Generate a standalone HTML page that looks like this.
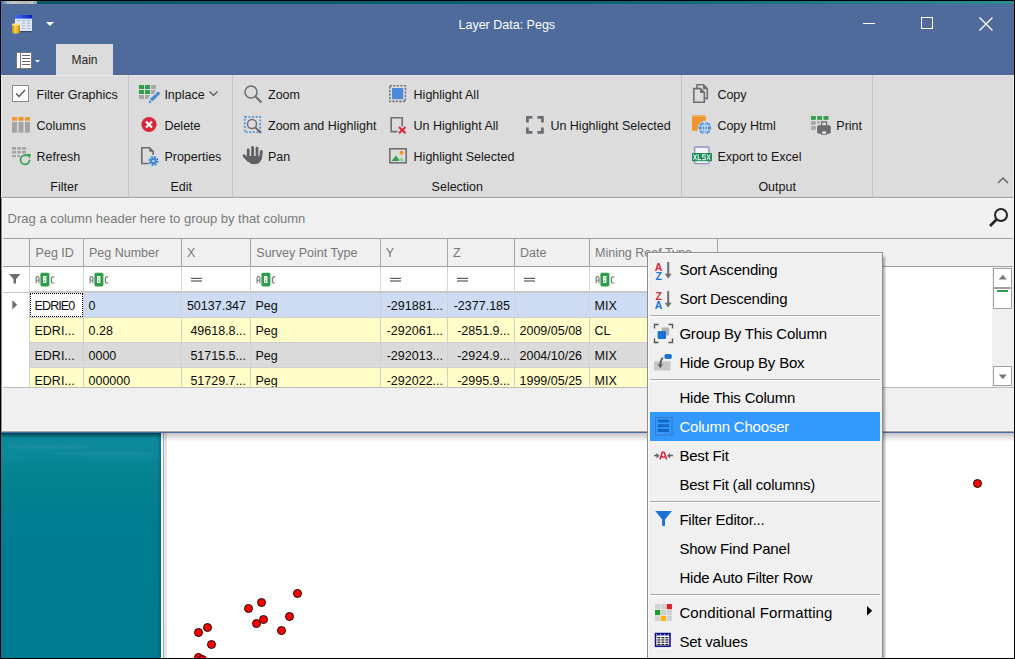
<!DOCTYPE html>
<html><head><meta charset="utf-8"><title>Layer Data: Pegs</title>
<style>
html,body{margin:0;padding:0;}
body{width:1015px;height:659px;overflow:hidden;position:relative;background:#000;font-family:"Liberation Sans", sans-serif;}
.t{position:absolute;white-space:nowrap;font-family:"Liberation Sans", sans-serif;}
svg{overflow:visible}
</style></head><body>
<div style="position:absolute;left:1px;top:1px;width:1013px;height:657px;background:#007c91"></div>
<div style="position:absolute;left:1px;top:1px;width:1013px;height:3px;background:linear-gradient(90deg,#0a5666 0%,#0c6374 60%,#2d8c93 100%)"></div>
<div style="position:absolute;left:1px;top:433px;width:160px;height:225px;background:linear-gradient(180deg,#04606e 0px,#0a7f92 2px,#0d899c 6px,#0b889b 22px,#06838f 42px,#007d91 80px,#007c91 140px,#007a8e 225px)"></div>
<div style="position:absolute;left:1px;top:1px;width:36px;height:3px;background:linear-gradient(90deg,#2f7ab4 0px,#a4b4be 6px,#c4c6c4 12px,#b2b6b4 24px,#c2c6c2 31px,#7aa2a4 36px)"></div>
<div style="position:absolute;left:1px;top:4px;width:1013px;height:71px;background:#4e6b9c"></div>
<svg style="position:absolute;left:11px;top:14px" width="24" height="21" viewBox="0 0 24 21"><defs><linearGradient id="cy" x1="0" x2="1"><stop offset="0" stop-color="#c98f0c"/><stop offset="0.45" stop-color="#f7d25a"/><stop offset="1" stop-color="#c48a08"/></linearGradient>
<linearGradient id="hd" x1="0" x2="1"><stop offset="0" stop-color="#3d6ff0"/><stop offset="1" stop-color="#0a1fc8"/></linearGradient></defs>
<rect x="4" y="1" width="17" height="16.5" fill="#dfe6f5"/>
<rect x="4" y="1" width="17" height="3.6" fill="url(#hd)"/>
<g fill="#a4b2cc"><rect x="6" y="6" width="3" height="1"/><rect x="11" y="6" width="3" height="1"/><rect x="16" y="6" width="3" height="1"/>
<rect x="11" y="8.6" width="3" height="1"/><rect x="16" y="8.6" width="3" height="1"/><rect x="11" y="11.2" width="3" height="1"/><rect x="16" y="11.2" width="3" height="1"/><rect x="11" y="13.8" width="3" height="1"/><rect x="16" y="13.8" width="3" height="1"/></g>
<rect x="4" y="17" width="17" height="1.2" fill="#34496e"/>
<path d="M1 10.5V18Q1 19.5 5 19.5Q9 19.5 9 18V10.5Z" fill="url(#cy)"/>
<ellipse cx="5" cy="10.5" rx="4" ry="1.3" fill="#fbe58a"/></svg>
<svg style="position:absolute;left:46px;top:22px" width="8" height="5" viewBox="0 0 8 5"><path d="M0 0H8L4 4Z" fill="#fff"/></svg>
<div class="t" style="left:458.5px;top:19.42px;font-size:12.5px;line-height:12.5px;color:#ffffff;">Layer Data: Pegs</div>
<div style="position:absolute;left:863px;top:23px;width:12px;height:1px;background:#fff"></div>
<div style="position:absolute;left:921px;top:17px;width:12px;height:12px;border:1px solid #fff;box-sizing:border-box"></div>
<svg style="position:absolute;left:979px;top:17px" width="14" height="14" viewBox="0 0 14 14"><path d="M0.5 0.5L13.5 13.5M13.5 0.5L0.5 13.5" stroke="#fff" stroke-width="1.3"/></svg>
<div style="position:absolute;left:1px;top:4px;width:1px;height:70px;background:#5577aa"></div>
<div style="position:absolute;left:1px;top:74px;width:1013px;height:1px;background:#48659a"></div>
<svg style="position:absolute;left:15px;top:51px" width="28" height="20" viewBox="0 0 28 20">
<rect x="1.5" y="1.5" width="15" height="16" fill="#fff" stroke="#777" stroke-width="1"/>
<rect x="5" y="2" width="1" height="15" fill="#777"/>
<g fill="#666"><rect x="7" y="4" width="8" height="1"/><rect x="7" y="7" width="8" height="1"/><rect x="7" y="10" width="8" height="1"/><rect x="7" y="13" width="8" height="1"/></g>
<path d="M20 9H25L22.5 11.5Z" fill="#fff"/>
</svg>
<div style="position:absolute;left:56px;top:44px;width:57px;height:31px;background:#dcdcdc"></div>
<div class="t" style="left:71.5px;top:53.84px;font-size:12px;line-height:12px;color:#1e1e1e;">Main</div>
<div style="position:absolute;left:1px;top:75px;width:1013px;height:122px;background:#dcdcdc"></div>
<div style="position:absolute;left:1px;top:196px;width:1013px;height:1px;background:#d6d6d6"></div>
<div style="position:absolute;left:1px;top:197px;width:1013px;height:1px;background:#a4a4a4"></div>
<div style="position:absolute;left:1px;top:75px;width:1013px;height:1px;background:#e6e6e4"></div>
<div style="position:absolute;left:1px;top:75px;width:1px;height:122px;background:#ebebeb"></div>
<div style="position:absolute;left:128px;top:75px;width:1px;height:122px;background:#c4c4c4"></div>
<div style="position:absolute;left:232px;top:75px;width:1px;height:122px;background:#c4c4c4"></div>
<div style="position:absolute;left:681px;top:75px;width:1px;height:122px;background:#c4c4c4"></div>
<div style="position:absolute;left:872px;top:75px;width:1px;height:122px;background:#c4c4c4"></div>
<svg style="position:absolute;left:12px;top:85px" width="17" height="17" viewBox="0 0 17 17"><rect x="0.5" y="0.5" width="16" height="16" fill="#fff" stroke="#8c8c8c"/><path d="M4 8.5L7 11.5L13 5" fill="none" stroke="#555" stroke-width="1.3"/></svg>
<div class="t" style="left:36.5px;top:89.42px;font-size:12.5px;line-height:12.5px;color:#161616;">Filter Graphics</div>
<svg style="position:absolute;left:12px;top:117px" width="18" height="16" viewBox="0 0 18 16"><g fill="#f0962d"><rect x="0" y="0" width="5" height="3.7"/><rect x="6.5" y="0" width="5" height="3.7"/><rect x="13" y="0" width="5" height="3.7"/></g>
<g fill="#a3a3a8"><rect x="0" y="5" width="5" height="10.6"/><rect x="6.5" y="5" width="5" height="10.6"/><rect x="13" y="5" width="5" height="10.6"/></g></svg>
<div class="t" style="left:36.5px;top:120.42px;font-size:12.5px;line-height:12.5px;color:#161616;">Columns</div>
<svg style="position:absolute;left:12px;top:145px" width="21" height="21" viewBox="0 0 21 21"><g fill="#a3a3a8"><rect x="0" y="2" width="4" height="2.7"/><rect x="5.1" y="2" width="3.8" height="2.7"/><rect x="10" y="2" width="4" height="2.7"/>
<rect x="0" y="5.9" width="4" height="2.6"/><rect x="5.1" y="5.9" width="3.8" height="2.6"/><rect x="10" y="5.9" width="4" height="2.6"/><rect x="0" y="10" width="4" height="2.1"/><rect x="5.1" y="10" width="3" height="2"/></g>
<path d="M17.6 14.8A4.6 4.6 0 1 1 15.3 10.8" fill="none" stroke="#2f9e4f" stroke-width="1.6"/><path d="M14.2 8.8L19 9.2L17.6 13.6Z" fill="#2f9e4f"/></svg>
<div class="t" style="left:36.5px;top:151.42px;font-size:12.5px;line-height:12.5px;color:#161616;">Refresh</div>
<div class="t" style="left:50.3px;top:181.42px;font-size:12.5px;line-height:12.5px;color:#161616;">Filter</div>
<svg style="position:absolute;left:138px;top:85px" width="22" height="18" viewBox="0 0 22 18"><g fill="#2e9e48"><rect x="1" y="0" width="5" height="4"/><rect x="7" y="0" width="5" height="4"/><rect x="1" y="5" width="5" height="4"/><rect x="7" y="5" width="5" height="4"/></g>
<g fill="#a6a6aa"><rect x="13" y="0" width="5" height="4"/><path d="M13 5H18L16 9H13Z"/><rect x="1" y="10" width="5" height="4"/><path d="M7 10H12L10 14H7Z"/></g>
<path d="M13 15.2L18.2 10.4" stroke="#4a8ad8" stroke-width="3.4"/><path d="M19.2 9.4L20.2 8.5" stroke="#4a8ad8" stroke-width="3.4" stroke-linecap="round"/><path d="M10.6 18.2L11.3 14.9L13.7 17.4Z" fill="#4a8ad8"/></svg>
<div class="t" style="left:164.4px;top:89.42px;font-size:12.5px;line-height:12.5px;color:#161616;">Inplace</div>
<svg style="position:absolute;left:209px;top:91px" width="9" height="6" viewBox="0 0 9 6"><path d="M0.5 0.5L4.5 4.5L8.5 0.5" fill="none" stroke="#555" stroke-width="1.2"/></svg>
<svg style="position:absolute;left:141px;top:116px" width="17" height="17" viewBox="0 0 17 17"><circle cx="8" cy="8.5" r="7.6" fill="#d9263b"/><path d="M5 5.5L11 11.5M11 5.5L5 11.5" stroke="#fff" stroke-width="2.2"/></svg>
<div class="t" style="left:164.4px;top:120.42px;font-size:12.5px;line-height:12.5px;color:#161616;">Delete</div>
<svg style="position:absolute;left:140px;top:146px" width="20" height="21" viewBox="0 0 20 21"><path d="M8.5 17.5H1.8V1.8H9.5L13.2 5.5V9" fill="none" stroke="#6b6b70" stroke-width="1.6"/><path d="M9.3 1.8V5.7H13.2Z" fill="#6b6b70"/>
<circle cx="13.5" cy="15" r="3.9" fill="none" stroke="#3b82d4" stroke-width="2.2" stroke-dasharray="1.9 1.15"/><circle cx="13.5" cy="15" r="3.1" fill="#3b82d4"/><circle cx="13.5" cy="15" r="1.2" fill="#dcdcdc"/></svg>
<div class="t" style="left:164.4px;top:151.42px;font-size:12.5px;line-height:12.5px;color:#161616;">Properties</div>
<div class="t" style="left:170.5px;top:181.42px;font-size:12.5px;line-height:12.5px;color:#161616;">Edit</div>
<svg style="position:absolute;left:243px;top:84px" width="20" height="20" viewBox="0 0 20 20"><circle cx="8" cy="8" r="6" fill="none" stroke="#6b6b70" stroke-width="1.5"/><path d="M12.5 12.5L18.5 18.5" stroke="#6b6b70" stroke-width="2"/></svg>
<div class="t" style="left:268px;top:89.42px;font-size:12.5px;line-height:12.5px;color:#161616;">Zoom</div>
<svg style="position:absolute;left:243px;top:115px" width="20" height="20" viewBox="0 0 20 20"><rect x="1.8" y="1.8" width="15.4" height="15.4" fill="none" stroke="#5b9bd8" stroke-width="1.8" stroke-dasharray="2.2 1.4"/><circle cx="9" cy="9" r="4.5" fill="none" stroke="#6b6b70" stroke-width="1.4"/><path d="M12.5 12.5L18 18" stroke="#6b6b70" stroke-width="2"/></svg>
<div class="t" style="left:268px;top:120.42px;font-size:12.5px;line-height:12.5px;color:#161616;">Zoom and Highlight</div>
<svg style="position:absolute;left:242px;top:145px" width="22" height="20" viewBox="0 0 22 20"><g stroke="#5f6066" stroke-width="2.8" stroke-linecap="round"><path d="M6.2 4.8V12"/><path d="M10.6 2.4V12"/><path d="M15 3.2V12"/><path d="M19.4 6.5L18.6 13"/><path d="M2 10.8L6.2 15.2"/></g><path d="M4.8 11H20L19 15.2Q17.2 19.2 12.4 19.2Q8.4 19.2 5.8 16.2Z" fill="#5f6066"/></svg>
<div class="t" style="left:268px;top:151.42px;font-size:12.5px;line-height:12.5px;color:#161616;">Pan</div>
<svg style="position:absolute;left:389px;top:85px" width="18" height="18" viewBox="0 0 18 18"><rect x="0.8" y="0.8" width="15.6" height="15.6" fill="none" stroke="#75757a" stroke-width="1.6" stroke-dasharray="2.2 1.3"/><rect x="3" y="3" width="11.2" height="11.2" fill="#4a8ad8"/></svg>
<div class="t" style="left:413.6px;top:89.42px;font-size:12.5px;line-height:12.5px;color:#161616;">Highlight All</div>
<svg style="position:absolute;left:389px;top:116px" width="18" height="18" viewBox="0 0 18 18"><path d="M13.2 10.5V1.8H2.2V15.6H8.5" fill="none" stroke="#707074" stroke-width="1.6"/><path d="M10 11L16.5 17.3M16.5 11L10 17.3" stroke="#d9263b" stroke-width="2"/></svg>
<div class="t" style="left:413.6px;top:120.42px;font-size:12.5px;line-height:12.5px;color:#161616;">Un Highlight All</div>
<svg style="position:absolute;left:389px;top:148px" width="18" height="16" viewBox="0 0 18 16"><rect x="0.8" y="0.8" width="16.4" height="14" fill="none" stroke="#707074" stroke-width="1.6"/><path d="M2.5 13L7 7.5L11 13Z" fill="#2e9e48"/><path d="M9 13L12 9.5L15.5 13Z" fill="#8fcf9f"/><circle cx="12.5" cy="4.8" r="2" fill="#f0962d"/></svg>
<div class="t" style="left:413.6px;top:151.42px;font-size:12.5px;line-height:12.5px;color:#161616;">Highlight Selected</div>
<svg style="position:absolute;left:526px;top:116px" width="19" height="19" viewBox="0 0 19 19"><g fill="none" stroke="#6c6c74" stroke-width="2.8"><path d="M1.4 6.4V1.4H6.4"/><path d="M11.4 1.4H16.4V6.4"/><path d="M16.4 11.4V16.4H11.4"/><path d="M6.4 16.4H1.4V11.4"/></g></svg>
<div class="t" style="left:550.4px;top:120.42px;font-size:12.5px;line-height:12.5px;color:#161616;">Un Highlight Selected</div>
<div class="t" style="left:431.6px;top:181.42px;font-size:12.5px;line-height:12.5px;color:#161616;">Selection</div>
<svg style="position:absolute;left:692px;top:83px" width="20" height="21" viewBox="0 0 20 21"><path d="M5 5V1.8H11.5L15.3 5.6V15.4H12.8" fill="none" stroke="#6e6e72" stroke-width="1.6"/><path d="M11 1.8V6.2H15.3Z" fill="#6e6e72"/><path d="M1.8 5.6H8.5L12.3 9.4V19.2H1.8Z" fill="#dcdcdc" stroke="#6e6e72" stroke-width="1.6"/><path d="M8 5.6V10H12.3Z" fill="#6e6e72"/></svg>
<div class="t" style="left:717.4px;top:89.42px;font-size:12.5px;line-height:12.5px;color:#161616;">Copy</div>
<svg style="position:absolute;left:691px;top:115px" width="21" height="20" viewBox="0 0 21 20"><rect x="1" y="0.3" width="14" height="15.5" rx="1.5" fill="#f0962d"/><rect x="1" y="0.3" width="14" height="1.6" rx="0.8" fill="#f5ad5e"/><circle cx="13.8" cy="13" r="7.2" fill="#dcdcdc"/><circle cx="13.8" cy="13" r="6.2" fill="#4a8ad8"/><g fill="none" stroke="#e8f0fa" stroke-width="0.9"><ellipse cx="13.8" cy="13" rx="2.6" ry="6"/><path d="M13.8 7V19M7.8 11H19.8M7.8 15H19.8"/></g></svg>
<div class="t" style="left:717.4px;top:120.42px;font-size:12.5px;line-height:12.5px;color:#161616;">Copy Html</div>
<svg style="position:absolute;left:691px;top:146px" width="22" height="19" viewBox="0 0 22 19"><rect x="3.6" y="1" width="14.4" height="16.6" rx="1" fill="#f4f4f8" stroke="#8a94c8" stroke-width="1.4"/><rect x="1" y="7" width="20" height="8.2" fill="#1f8a5b"/><g fill="none" stroke="#d8f0e2" stroke-width="1.1"><path d="M2.5 8.5L5.5 13.8M5.5 8.5L2.5 13.8"/><path d="M7.2 8.3V13.6H10"/><path d="M14.6 8.6H11.6V11H14.2V13.6H11.2"/><path d="M16 8.5L19.2 13.8M19.2 8.5L16 13.8"/></g></svg>
<div class="t" style="left:717.4px;top:151.42px;font-size:12.5px;line-height:12.5px;color:#161616;">Export to Excel</div>
<svg style="position:absolute;left:810px;top:115px" width="22" height="21" viewBox="0 0 22 21"><g fill="#2e9e48"><rect x="1" y="1.1" width="4.8" height="3.7"/><rect x="7.2" y="1.1" width="4.8" height="3.7"/><rect x="13.5" y="1.1" width="5" height="3.7"/></g><g fill="#a6a6aa"><rect x="1" y="6.2" width="4.8" height="3.6"/><rect x="1" y="11.2" width="4.8" height="3.6"/><rect x="7.2" y="6.2" width="2.5" height="2.5"/></g><rect x="11.7" y="6.9" width="4.8" height="5" fill="#e4e4e4" stroke="#6b6b70" stroke-width="1.4"/><rect x="7.2" y="10.2" width="13.6" height="8.5" rx="1.6" fill="#6b6b70"/><rect x="11" y="15.5" width="6" height="4.3" fill="#6b6b70"/><rect x="12.2" y="16.3" width="3.8" height="2.5" fill="#e4e4e4"/></svg>
<div class="t" style="left:836.3px;top:120.42px;font-size:12.5px;line-height:12.5px;color:#161616;">Print</div>
<div class="t" style="left:758.4px;top:181.42px;font-size:12.5px;line-height:12.5px;color:#161616;">Output</div>
<svg style="position:absolute;left:997px;top:177px" width="12" height="7" viewBox="0 0 12 7"><path d="M1 6L6 1L11 6" fill="none" stroke="#666" stroke-width="1.5"/></svg>
<div style="position:absolute;left:1px;top:198px;width:1013px;height:40px;background:#f0f0f0"></div>
<div class="t" style="left:7.6px;top:211.50px;font-size:13px;line-height:13px;color:#7a7a7a;">Drag a column header here to group by that column</div>
<svg style="position:absolute;left:988px;top:207px" width="22" height="21" viewBox="0 0 22 21"><circle cx="13" cy="8" r="6" fill="none" stroke="#222" stroke-width="2"/><path d="M8.5 12.5L2 19" stroke="#222" stroke-width="2.6"/></svg>
<div style="position:absolute;left:2px;top:198px;width:1011px;height:1px;background:#f7f7f7"></div>
<div style="position:absolute;left:1px;top:238px;width:1013px;height:1px;background:#a0a0a0"></div>
<div style="position:absolute;left:1px;top:239px;width:1013px;height:27px;background:#f0f0f0"></div>
<div style="position:absolute;left:1px;top:266px;width:1013px;height:1px;background:#a0a0a0"></div>
<div style="position:absolute;left:1px;top:267px;width:991px;height:120px;background:#fff"></div>
<div style="position:absolute;left:992px;top:267px;width:21px;height:120px;background:#f0f0f0"></div>
<div style="position:absolute;left:1013px;top:75px;width:1px;height:357px;background:#ececec"></div>
<div style="position:absolute;left:29px;top:239px;width:1px;height:27px;background:#a8a8a8"></div>
<div style="position:absolute;left:83px;top:239px;width:1px;height:27px;background:#a8a8a8"></div>
<div style="position:absolute;left:181px;top:239px;width:1px;height:27px;background:#a8a8a8"></div>
<div style="position:absolute;left:250px;top:239px;width:1px;height:27px;background:#a8a8a8"></div>
<div style="position:absolute;left:380px;top:239px;width:1px;height:27px;background:#a8a8a8"></div>
<div style="position:absolute;left:447px;top:239px;width:1px;height:27px;background:#a8a8a8"></div>
<div style="position:absolute;left:514px;top:239px;width:1px;height:27px;background:#a8a8a8"></div>
<div style="position:absolute;left:589px;top:239px;width:1px;height:27px;background:#a8a8a8"></div>
<div style="position:absolute;left:717px;top:239px;width:1px;height:27px;background:#a8a8a8"></div>
<div style="position:absolute;left:1px;top:292px;width:29px;height:1px;background:#c8c8c8"></div>
<div style="position:absolute;left:30px;top:291px;width:687px;height:2px;background:#c8c8c8"></div>
<div style="position:absolute;left:29px;top:267px;width:1px;height:24px;background:#d4d4d4"></div>
<div style="position:absolute;left:83px;top:267px;width:1px;height:24px;background:#d4d4d4"></div>
<div style="position:absolute;left:181px;top:267px;width:1px;height:24px;background:#d4d4d4"></div>
<div style="position:absolute;left:250px;top:267px;width:1px;height:24px;background:#d4d4d4"></div>
<div style="position:absolute;left:380px;top:267px;width:1px;height:24px;background:#d4d4d4"></div>
<div style="position:absolute;left:447px;top:267px;width:1px;height:24px;background:#d4d4d4"></div>
<div style="position:absolute;left:514px;top:267px;width:1px;height:24px;background:#d4d4d4"></div>
<div style="position:absolute;left:589px;top:267px;width:1px;height:24px;background:#d4d4d4"></div>
<div style="position:absolute;left:717px;top:267px;width:1px;height:24px;background:#d4d4d4"></div>
<div class="t" style="left:35.6px;top:247.42px;font-size:12.5px;line-height:12.5px;color:#777777;">Peg ID</div>
<div class="t" style="left:89px;top:247.42px;font-size:12.5px;line-height:12.5px;color:#777777;">Peg Number</div>
<div class="t" style="left:187px;top:247.42px;font-size:12.5px;line-height:12.5px;color:#777777;">X</div>
<div class="t" style="left:256.3px;top:247.42px;font-size:12.5px;line-height:12.5px;color:#777777;">Survey Point Type</div>
<div class="t" style="left:385.8px;top:247.42px;font-size:12.5px;line-height:12.5px;color:#777777;">Y</div>
<div class="t" style="left:453px;top:247.42px;font-size:12.5px;line-height:12.5px;color:#777777;">Z</div>
<div class="t" style="left:520px;top:247.42px;font-size:12.5px;line-height:12.5px;color:#777777;">Date</div>
<div class="t" style="left:595px;top:247.42px;font-size:12.5px;line-height:12.5px;color:#777777;">Mining Reef Type</div>
<svg style="position:absolute;left:9px;top:274px" width="12" height="10" viewBox="0 0 12 10"><path d="M0 0H11.5L7 5V9.5L4.5 9.5V5Z" fill="#6e6e72"/></svg>
<svg style="position:absolute;left:34.8px;top:272px" width="21" height="15" viewBox="0 0 21 15"><path d="M1.1 11.3V5.6L1.9 4.5H3.1L3.9 5.6V11.3M1.1 8.2H3.9" fill="none" stroke="#77777d" stroke-width="1.15"/><rect x="5.4" y="0.7" width="9" height="13.7" rx="1.6" fill="#2e9e48"/><rect x="8" y="4" width="3.4" height="7" rx="0.6" fill="#fff"/><rect x="9.2" y="5.5" width="1" height="1.3" fill="#2e9e48"/><rect x="9.2" y="8.3" width="1" height="1.6" fill="#2e9e48"/><path d="M19.2 4.9H17.4L16.4 5.9V10.1L17.4 11H19.2" fill="none" stroke="#77777d" stroke-width="1.2"/></svg>
<svg style="position:absolute;left:88.5px;top:272px" width="21" height="15" viewBox="0 0 21 15"><path d="M1.1 11.3V5.6L1.9 4.5H3.1L3.9 5.6V11.3M1.1 8.2H3.9" fill="none" stroke="#77777d" stroke-width="1.15"/><rect x="5.4" y="0.7" width="9" height="13.7" rx="1.6" fill="#2e9e48"/><rect x="8" y="4" width="3.4" height="7" rx="0.6" fill="#fff"/><rect x="9.2" y="5.5" width="1" height="1.3" fill="#2e9e48"/><rect x="9.2" y="8.3" width="1" height="1.6" fill="#2e9e48"/><path d="M19.2 4.9H17.4L16.4 5.9V10.1L17.4 11H19.2" fill="none" stroke="#77777d" stroke-width="1.2"/></svg>
<div style="position:absolute;left:191px;top:277px;width:11px;height:1px;background:#e0e0e4"></div>
<div style="position:absolute;left:191px;top:278px;width:11px;height:1px;background:#5c5c66"></div>
<div style="position:absolute;left:191px;top:280px;width:11px;height:2px;background:#9a9aa4"></div>
<svg style="position:absolute;left:256px;top:272px" width="21" height="15" viewBox="0 0 21 15"><path d="M1.1 11.3V5.6L1.9 4.5H3.1L3.9 5.6V11.3M1.1 8.2H3.9" fill="none" stroke="#77777d" stroke-width="1.15"/><rect x="5.4" y="0.7" width="9" height="13.7" rx="1.6" fill="#2e9e48"/><rect x="8" y="4" width="3.4" height="7" rx="0.6" fill="#fff"/><rect x="9.2" y="5.5" width="1" height="1.3" fill="#2e9e48"/><rect x="9.2" y="8.3" width="1" height="1.6" fill="#2e9e48"/><path d="M19.2 4.9H17.4L16.4 5.9V10.1L17.4 11H19.2" fill="none" stroke="#77777d" stroke-width="1.2"/></svg>
<div style="position:absolute;left:390px;top:277px;width:11px;height:1px;background:#e0e0e4"></div>
<div style="position:absolute;left:390px;top:278px;width:11px;height:1px;background:#5c5c66"></div>
<div style="position:absolute;left:390px;top:280px;width:11px;height:2px;background:#9a9aa4"></div>
<div style="position:absolute;left:457px;top:277px;width:11px;height:1px;background:#e0e0e4"></div>
<div style="position:absolute;left:457px;top:278px;width:11px;height:1px;background:#5c5c66"></div>
<div style="position:absolute;left:457px;top:280px;width:11px;height:2px;background:#9a9aa4"></div>
<div style="position:absolute;left:524px;top:277px;width:11px;height:1px;background:#e0e0e4"></div>
<div style="position:absolute;left:524px;top:278px;width:11px;height:1px;background:#5c5c66"></div>
<div style="position:absolute;left:524px;top:280px;width:11px;height:2px;background:#9a9aa4"></div>
<svg style="position:absolute;left:595px;top:272px" width="21" height="15" viewBox="0 0 21 15"><path d="M1.1 11.3V5.6L1.9 4.5H3.1L3.9 5.6V11.3M1.1 8.2H3.9" fill="none" stroke="#77777d" stroke-width="1.15"/><rect x="5.4" y="0.7" width="9" height="13.7" rx="1.6" fill="#2e9e48"/><rect x="8" y="4" width="3.4" height="7" rx="0.6" fill="#fff"/><rect x="9.2" y="5.5" width="1" height="1.3" fill="#2e9e48"/><rect x="9.2" y="8.3" width="1" height="1.6" fill="#2e9e48"/><path d="M19.2 4.9H17.4L16.4 5.9V10.1L17.4 11H19.2" fill="none" stroke="#77777d" stroke-width="1.2"/></svg>
<div style="position:absolute;left:30px;top:293px;width:687px;height:24px;background:#cddcf3"></div>
<div style="position:absolute;left:30px;top:317px;width:687px;height:1px;background:#cfcfcf"></div>
<div class="t" style="left:34.5px;top:300.42px;font-size:12.5px;line-height:12.5px;color:#0c0c0c;">EDRIE0</div>
<div class="t" style="left:88.5px;top:300.42px;font-size:12.5px;line-height:12.5px;color:#0c0c0c;">0</div>
<div class="t" style="left:182px;width:64px;text-align:right;top:300.42px;font-size:12.5px;line-height:12.5px;color:#0c0c0c">50137.347</div>
<div class="t" style="left:255.5px;top:300.42px;font-size:12.5px;line-height:12.5px;color:#0c0c0c;">Peg</div>
<div class="t" style="left:381px;width:62px;text-align:right;top:300.42px;font-size:12.5px;line-height:12.5px;color:#0c0c0c">-291881...</div>
<div class="t" style="left:448px;width:62px;text-align:right;top:300.42px;font-size:12.5px;line-height:12.5px;color:#0c0c0c">-2377.185</div>
<div class="t" style="left:594.5px;top:300.42px;font-size:12.5px;line-height:12.5px;color:#0c0c0c;">MIX</div>
<div style="position:absolute;left:30px;top:318px;width:687px;height:24px;background:#fffdc8"></div>
<div style="position:absolute;left:30px;top:342px;width:687px;height:1px;background:#cfcfcf"></div>
<div class="t" style="left:34.5px;top:325.42px;font-size:12.5px;line-height:12.5px;color:#0c0c0c;">EDRI...</div>
<div class="t" style="left:88.5px;top:325.42px;font-size:12.5px;line-height:12.5px;color:#0c0c0c;">0.28</div>
<div class="t" style="left:182px;width:64px;text-align:right;top:325.42px;font-size:12.5px;line-height:12.5px;color:#0c0c0c">49618.8...</div>
<div class="t" style="left:255.5px;top:325.42px;font-size:12.5px;line-height:12.5px;color:#0c0c0c;">Peg</div>
<div class="t" style="left:381px;width:62px;text-align:right;top:325.42px;font-size:12.5px;line-height:12.5px;color:#0c0c0c">-292061...</div>
<div class="t" style="left:448px;width:62px;text-align:right;top:325.42px;font-size:12.5px;line-height:12.5px;color:#0c0c0c">-2851.9...</div>
<div class="t" style="left:519.5px;top:325.42px;font-size:12.5px;line-height:12.5px;color:#0c0c0c;">2009/05/08</div>
<div class="t" style="left:594.5px;top:325.42px;font-size:12.5px;line-height:12.5px;color:#0c0c0c;">CL</div>
<div style="position:absolute;left:30px;top:343px;width:687px;height:24px;background:#dadada"></div>
<div style="position:absolute;left:30px;top:367px;width:687px;height:1px;background:#cfcfcf"></div>
<div class="t" style="left:34.5px;top:350.42px;font-size:12.5px;line-height:12.5px;color:#0c0c0c;">EDRI...</div>
<div class="t" style="left:88.5px;top:350.42px;font-size:12.5px;line-height:12.5px;color:#0c0c0c;">0000</div>
<div class="t" style="left:182px;width:64px;text-align:right;top:350.42px;font-size:12.5px;line-height:12.5px;color:#0c0c0c">51715.5...</div>
<div class="t" style="left:255.5px;top:350.42px;font-size:12.5px;line-height:12.5px;color:#0c0c0c;">Peg</div>
<div class="t" style="left:381px;width:62px;text-align:right;top:350.42px;font-size:12.5px;line-height:12.5px;color:#0c0c0c">-292013...</div>
<div class="t" style="left:448px;width:62px;text-align:right;top:350.42px;font-size:12.5px;line-height:12.5px;color:#0c0c0c">-2924.9...</div>
<div class="t" style="left:519.5px;top:350.42px;font-size:12.5px;line-height:12.5px;color:#0c0c0c;">2004/10/26</div>
<div class="t" style="left:594.5px;top:350.42px;font-size:12.5px;line-height:12.5px;color:#0c0c0c;">MIX</div>
<div style="position:absolute;left:30px;top:368px;width:687px;height:19px;background:#fffdc8"></div>
<div class="t" style="left:34.5px;top:375.42px;font-size:12.5px;line-height:12.5px;color:#0c0c0c;">EDRI...</div>
<div class="t" style="left:88.5px;top:375.42px;font-size:12.5px;line-height:12.5px;color:#0c0c0c;">000000</div>
<div class="t" style="left:182px;width:64px;text-align:right;top:375.42px;font-size:12.5px;line-height:12.5px;color:#0c0c0c">51729.7...</div>
<div class="t" style="left:255.5px;top:375.42px;font-size:12.5px;line-height:12.5px;color:#0c0c0c;">Peg</div>
<div class="t" style="left:381px;width:62px;text-align:right;top:375.42px;font-size:12.5px;line-height:12.5px;color:#0c0c0c">-292022...</div>
<div class="t" style="left:448px;width:62px;text-align:right;top:375.42px;font-size:12.5px;line-height:12.5px;color:#0c0c0c">-2995.9...</div>
<div class="t" style="left:519.5px;top:375.42px;font-size:12.5px;line-height:12.5px;color:#0c0c0c;">1999/05/25</div>
<div class="t" style="left:594.5px;top:375.42px;font-size:12.5px;line-height:12.5px;color:#0c0c0c;">MIX</div>
<div style="position:absolute;left:83px;top:292px;width:1px;height:95px;background:#d0d0d0"></div>
<div style="position:absolute;left:181px;top:292px;width:1px;height:95px;background:#d0d0d0"></div>
<div style="position:absolute;left:250px;top:292px;width:1px;height:95px;background:#d0d0d0"></div>
<div style="position:absolute;left:380px;top:292px;width:1px;height:95px;background:#d0d0d0"></div>
<div style="position:absolute;left:447px;top:292px;width:1px;height:95px;background:#d0d0d0"></div>
<div style="position:absolute;left:514px;top:292px;width:1px;height:95px;background:#d0d0d0"></div>
<div style="position:absolute;left:589px;top:292px;width:1px;height:95px;background:#d0d0d0"></div>
<div style="position:absolute;left:717px;top:292px;width:1px;height:95px;background:#d0d0d0"></div>
<div style="position:absolute;left:29px;top:267px;width:1px;height:120px;background:#d0d0d0"></div>
<div style="position:absolute;left:30px;top:293px;width:53px;height:24px;background:#fff;outline:1px dotted #000;outline-offset:-1px"></div>
<div class="t" style="left:34.6px;top:300.42px;font-size:12.5px;line-height:12.5px;color:#0c0c0c;letter-spacing:-0.9px">EDRIE0</div>
<svg style="position:absolute;left:12px;top:300px" width="6" height="10" viewBox="0 0 6 10"><path d="M0.3 0L5.2 4.8L0.3 9.6Z" fill="#707070"/></svg>
<div style="position:absolute;left:993px;top:268px;width:19px;height:20px;background:#fff;border:1px solid #a0a0a0;box-sizing:border-box"></div>
<svg style="position:absolute;left:998px;top:274px" width="10" height="6" viewBox="0 0 10 6"><path d="M0.8 5.6L4.8 0.8L8.8 5.6Z" fill="#777"/></svg>
<div style="position:absolute;left:993px;top:288px;width:19px;height:21px;background:#fff;border:1px solid #a0a0a0;box-sizing:border-box"></div>
<div style="position:absolute;left:997px;top:290px;width:11px;height:2px;background:#2e9e48"></div>
<div style="position:absolute;left:993px;top:366px;width:19px;height:20px;background:#fff;border:1px solid #a0a0a0;box-sizing:border-box"></div>
<svg style="position:absolute;left:998px;top:374px" width="10" height="6" viewBox="0 0 10 6"><path d="M0.8 0.4H8.8L4.8 5.2Z" fill="#777"/></svg>
<div style="position:absolute;left:1px;top:387px;width:1013px;height:1px;background:#bdbdbd"></div>
<div style="position:absolute;left:1px;top:388px;width:1013px;height:43px;background:#f0f0f0"></div>
<div style="position:absolute;left:1px;top:430px;width:1013px;height:1px;background:#f6f6f6"></div>
<div style="position:absolute;left:1px;top:431px;width:1013px;height:1px;background:#aaa49c"></div>
<div style="position:absolute;left:1px;top:432px;width:1013px;height:1px;background:#4a6aa0"></div>
<div style="position:absolute;left:161px;top:433px;width:2px;height:225px;background:#f6f6f6"></div>
<div style="position:absolute;left:163px;top:433px;width:1px;height:225px;background:#ababab"></div>
<div style="position:absolute;left:164px;top:433px;width:3px;height:225px;background:#e4e4e4"></div>
<div style="position:absolute;left:167px;top:433px;width:847px;height:225px;background:#fff"></div>
<div style="position:absolute;left:161px;top:433px;width:853px;height:9px;background:linear-gradient(180deg,rgba(0,0,0,0.22),rgba(0,0,0,0))"></div>
<div style="position:absolute;left:1px;top:433px;width:160px;height:5px;background:linear-gradient(180deg,rgba(0,0,0,0.35),rgba(0,0,0,0))"></div>
<div style="position:absolute;left:5px;top:445px;width:90px;height:4px;background:rgba(255,255,255,0.05);border-radius:50%;filter:blur(1px)"></div>
<div style="position:absolute;left:50px;top:452px;width:110px;height:3px;background:rgba(255,255,255,0.06);border-radius:50%;filter:blur(1px)"></div>
<div style="position:absolute;left:20px;top:460px;width:70px;height:3px;background:rgba(0,0,0,0.04);border-radius:50%;filter:blur(1px)"></div>
<div style="position:absolute;left:157px;top:433px;width:4px;height:225px;background:linear-gradient(90deg,rgba(0,0,0,0),rgba(0,0,0,0.18))"></div>
<div style="position:absolute;left:292.7px;top:589.1px;width:7px;height:7px;border-radius:50%;background:#f00;border:1px solid #111"></div>
<div style="position:absolute;left:256.9px;top:598.1px;width:7px;height:7px;border-radius:50%;background:#f00;border:1px solid #111"></div>
<div style="position:absolute;left:244.1px;top:604.0px;width:7px;height:7px;border-radius:50%;background:#f00;border:1px solid #111"></div>
<div style="position:absolute;left:258.9px;top:614.9px;width:7px;height:7px;border-radius:50%;background:#f00;border:1px solid #111"></div>
<div style="position:absolute;left:252.1px;top:619.1px;width:7px;height:7px;border-radius:50%;background:#f00;border:1px solid #111"></div>
<div style="position:absolute;left:284.9px;top:611.9px;width:7px;height:7px;border-radius:50%;background:#f00;border:1px solid #111"></div>
<div style="position:absolute;left:277.2px;top:626.1px;width:7px;height:7px;border-radius:50%;background:#f00;border:1px solid #111"></div>
<div style="position:absolute;left:203.1px;top:622.9px;width:7px;height:7px;border-radius:50%;background:#f00;border:1px solid #111"></div>
<div style="position:absolute;left:194.1px;top:627.7px;width:7px;height:7px;border-radius:50%;background:#f00;border:1px solid #111"></div>
<div style="position:absolute;left:206.9px;top:639.9px;width:7px;height:7px;border-radius:50%;background:#f00;border:1px solid #111"></div>
<div style="position:absolute;left:194.1px;top:653.0px;width:7px;height:7px;border-radius:50%;background:#f00;border:1px solid #111"></div>
<div style="position:absolute;left:197.5px;top:654.5px;width:7px;height:7px;border-radius:50%;background:#f00;border:1px solid #111"></div>
<div style="position:absolute;left:972.5px;top:479.0px;width:7px;height:7px;border-radius:50%;background:#f00;border:1px solid #111"></div>
<div style="position:absolute;left:649px;top:257px;width:236px;height:420px;background:rgba(0,0,0,0.32);filter:blur(1.2px)"></div>
<div style="position:absolute;left:647px;top:252px;width:236px;height:410px;background:#f0f0f0;border:1px solid #8e8e8e;box-sizing:border-box;box-shadow:inset 1px 1px 0 #fafafa"></div>
<svg style="position:absolute;left:654px;top:261px" width="19" height="19" viewBox="0 0 19 19"><text x="4.6" y="9.7" font-family="Liberation Sans" font-weight="bold" font-size="10.5" fill="#d9263b" text-anchor="middle">A</text><text x="4.6" y="18.9" font-family="Liberation Sans" font-weight="bold" font-size="10.5" fill="#1a73d4" text-anchor="middle">Z</text><path d="M14.2 1V14" stroke="#6e6e6e" stroke-width="2"/><path d="M10.8 12.8L14.2 17.5L17.6 12.8Z" fill="#6e6e6e"/></svg>
<div class="t" style="left:679.4px;top:262.30px;font-size:15px;line-height:15px;color:#000;letter-spacing:-0.2px">Sort Ascending</div>
<svg style="position:absolute;left:654px;top:290px" width="19" height="19" viewBox="0 0 19 19"><text x="4.6" y="9.7" font-family="Liberation Sans" font-weight="bold" font-size="10.5" fill="#d9263b" text-anchor="middle">Z</text><text x="4.6" y="18.9" font-family="Liberation Sans" font-weight="bold" font-size="10.5" fill="#1a73d4" text-anchor="middle">A</text><path d="M14.2 1V14" stroke="#6e6e6e" stroke-width="2"/><path d="M10.8 12.8L14.2 17.5L17.6 12.8Z" fill="#6e6e6e"/></svg>
<div class="t" style="left:679.4px;top:291.30px;font-size:15px;line-height:15px;color:#000;letter-spacing:-0.2px">Sort Descending</div>
<div style="position:absolute;left:650px;top:315px;width:230px;height:1px;background:#a8a8a8"></div>
<div style="position:absolute;left:650px;top:316px;width:230px;height:1px;background:#ffffff"></div>
<svg style="position:absolute;left:653px;top:323px" width="21" height="21" viewBox="0 0 21 21"><g fill="none" stroke="#555" stroke-width="1.4"><path d="M1.5 5.5V1.5H5.5"/><path d="M15.5 1.5H19.5V5.5"/><path d="M19.5 15.5V19.5H15.5"/><path d="M5.5 19.5H1.5V15.5"/></g><rect x="8.5" y="4.6" width="7.6" height="8" rx="0.8" fill="#b4b4b6"/><rect x="4.6" y="8" width="8.4" height="8" rx="1" fill="#1a73d4"/></svg>
<div class="t" style="left:679.4px;top:326.30px;font-size:15px;line-height:15px;color:#000;letter-spacing:-0.2px">Group By This Column</div>
<svg style="position:absolute;left:653px;top:353px" width="20" height="19" viewBox="0 0 20 19"><rect x="1" y="8.2" width="16.4" height="9.4" rx="1" fill="#c6c6c8"/><rect x="11.4" y="1" width="7.5" height="5" rx="2" fill="#1a73d4"/><path d="M9.8 4.5Q7.2 7.5 7.3 12.5" fill="none" stroke="#5e5e62" stroke-width="1.8"/><path d="M4.6 11.2L7.2 15.3L10 11.5Z" fill="#5e5e62"/></svg>
<div class="t" style="left:679.4px;top:355.30px;font-size:15px;line-height:15px;color:#000;letter-spacing:-0.2px">Hide Group By Box</div>
<div style="position:absolute;left:650px;top:379px;width:230px;height:1px;background:#a8a8a8"></div>
<div style="position:absolute;left:650px;top:380px;width:230px;height:1px;background:#ffffff"></div>
<div class="t" style="left:679.4px;top:390.30px;font-size:15px;line-height:15px;color:#000;letter-spacing:-0.2px">Hide This Column</div>
<div style="position:absolute;left:650px;top:412px;width:230px;height:29px;background:#3399ff"></div>
<svg style="position:absolute;left:655px;top:417px" width="18" height="18" viewBox="0 0 18 18"><rect x="0.5" y="0.5" width="16.5" height="17.4" fill="none" stroke="#3a78c0" stroke-width="1"/><g fill="#1268c4"><rect x="2.8" y="2.5" width="11.3" height="3"/><rect x="2.8" y="7.3" width="11.3" height="2.8"/><rect x="2.8" y="11.9" width="11.3" height="3.1"/></g></svg>
<div class="t" style="left:679.4px;top:419.30px;font-size:15px;line-height:15px;color:#fff;letter-spacing:-0.2px">Column Chooser</div>
<svg style="position:absolute;left:653px;top:452px" width="21" height="9" viewBox="0 0 21 9"><path d="M1 3.5H4" stroke="#666" stroke-width="1.6"/><path d="M3.5 1L6.5 3.8L3.5 6.5Z" fill="#666"/><path d="M16.5 3.5H20" stroke="#666" stroke-width="1.6"/><path d="M17 1L14 3.8L17 6.5Z" fill="#666"/><path d="M7 7.5L9.3 0.3H11.2L13.6 7.5M8.2 5H12.4" fill="none" stroke="#d9263b" stroke-width="1.6"/></svg>
<div class="t" style="left:679.4px;top:448.30px;font-size:15px;line-height:15px;color:#000;letter-spacing:-0.2px">Best Fit</div>
<div class="t" style="left:679.4px;top:477.30px;font-size:15px;line-height:15px;color:#000;letter-spacing:-0.2px">Best Fit (all columns)</div>
<div style="position:absolute;left:650px;top:501px;width:230px;height:1px;background:#a8a8a8"></div>
<div style="position:absolute;left:650px;top:502px;width:230px;height:1px;background:#ffffff"></div>
<svg style="position:absolute;left:655px;top:510px" width="18" height="18" viewBox="0 0 18 18"><path d="M0.3 0.9H16.9L10 9.4V15.4Q8.5 17 7.1 15.4V9.4Z" fill="#1a73d4"/></svg>
<div class="t" style="left:679.4px;top:512.30px;font-size:15px;line-height:15px;color:#000;letter-spacing:-0.2px">Filter Editor...</div>
<div class="t" style="left:679.4px;top:541.30px;font-size:15px;line-height:15px;color:#000;letter-spacing:-0.2px">Show Find Panel</div>
<div class="t" style="left:679.4px;top:570.30px;font-size:15px;line-height:15px;color:#000;letter-spacing:-0.2px">Hide Auto Filter Row</div>
<div style="position:absolute;left:650px;top:594px;width:230px;height:1px;background:#a8a8a8"></div>
<div style="position:absolute;left:650px;top:595px;width:230px;height:1px;background:#ffffff"></div>
<svg style="position:absolute;left:655px;top:604px" width="18" height="18" viewBox="0 0 18 18"><g fill="#d2d2d2"><rect x="0" y="0" width="5.2" height="5.2"/><rect x="5.8" y="0" width="5.2" height="5.2"/><rect x="5.8" y="5.9" width="5.2" height="5.2"/><rect x="11.7" y="5.9" width="5.2" height="5.2"/><rect x="0" y="11.8" width="5.2" height="5.2"/><rect x="11.7" y="11.8" width="5.2" height="5.2"/></g><rect x="11.7" y="0" width="5.2" height="5.2" fill="#d9202a"/><rect x="0" y="5.9" width="5.2" height="5.2" fill="#1aa02a"/><rect x="5.8" y="11.8" width="5.2" height="5.2" fill="#ffad14"/></svg>
<div class="t" style="left:679.4px;top:605.30px;font-size:15px;line-height:15px;color:#000;letter-spacing:0.1px">Conditional Formatting</div>
<svg style="position:absolute;left:867px;top:606px" width="6" height="10" viewBox="0 0 6 10"><path d="M0 0L5.2 4.8L0 9.6Z" fill="#000"/></svg>
<svg style="position:absolute;left:654px;top:632px" width="18" height="18" viewBox="0 0 18 18"><rect x="0" y="0" width="17" height="16.5" fill="#fff"/><rect x="1.5" y="1.5" width="14.5" height="12.8" fill="#fff" stroke="#10108a" stroke-width="1.6"/><rect x="1" y="1" width="15.5" height="2.4" fill="#10108a"/><g fill="#fff"><circle cx="2.7" cy="2.2" r="0.5"/><circle cx="6.5" cy="2.2" r="0.5"/><circle cx="10.5" cy="2.2" r="0.5"/><circle cx="14.3" cy="2.2" r="0.5"/></g><g fill="#222"><rect x="3.4" y="5" width="3" height="1.3"/><rect x="7.4" y="5" width="3" height="1.3"/><rect x="11.4" y="5" width="3" height="1.3"/><rect x="3.4" y="7.3" width="3" height="1.3"/><rect x="7.4" y="7.3" width="3" height="1.3"/><rect x="11.4" y="7.3" width="3" height="1.3"/><rect x="3.4" y="9.6" width="3" height="1.3"/><rect x="7.4" y="9.6" width="3" height="1.3"/><rect x="11.4" y="9.6" width="3" height="1.3"/><rect x="3.4" y="11.9" width="3" height="1.3"/><rect x="7.4" y="11.9" width="3" height="1.3"/><rect x="11.4" y="11.9" width="3" height="1.3"/></g></svg>
<div class="t" style="left:679.4px;top:634.30px;font-size:15px;line-height:15px;color:#000;letter-spacing:-0.2px">Set values</div>
<div style="position:absolute;left:1px;top:198px;width:1px;height:233px;background:#8c8c8c"></div>
<div style="position:absolute;left:2px;top:199px;width:1px;height:232px;background:#f7f7f7"></div>
<div style="position:absolute;left:0px;top:0px;width:1015px;height:1px;background:#000"></div>
<div style="position:absolute;left:0px;top:658px;width:1015px;height:1px;background:#000"></div>
<div style="position:absolute;left:0px;top:0px;width:1px;height:659px;background:#000"></div>
<div style="position:absolute;left:1014px;top:0px;width:1px;height:659px;background:#000"></div>
</body></html>
